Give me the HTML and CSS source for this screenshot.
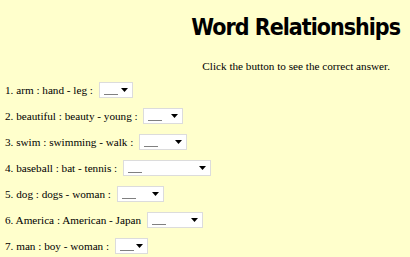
FILE: index.html
```html
<!DOCTYPE html>
<html lang="en">
<head>
    <meta charset="UTF-8">
    <title>Word Relationships</title>
    <link rel="stylesheet" href="styles.css">
</head>
<body>
    <div class="header">
        <h1>Word Relationships</h1>
        <p class="hint">Click the button to see the correct answer.</p>
    </div>
    <div class="questions">
        <div class="row">1. arm : hand - leg : <span class="pick w34"><span class="blank"></span><svg width="7" height="4" viewBox="0 0 7 4"><path d="M0 0h7L3.5 4z" fill="#000"/></svg></span></div>
        <div class="row">2. beautiful : beauty - young : <span class="pick w40"><span class="blank"></span><svg width="7" height="4" viewBox="0 0 7 4"><path d="M0 0h7L3.5 4z" fill="#000"/></svg></span></div>
        <div class="row">3. swim : swimming - walk : <span class="pick w48"><span class="blank"></span><svg width="7" height="4" viewBox="0 0 7 4"><path d="M0 0h7L3.5 4z" fill="#000"/></svg></span></div>
        <div class="row">4. baseball : bat - tennis : <span class="pick w88"><span class="blank"></span><svg width="7" height="4" viewBox="0 0 7 4"><path d="M0 0h7L3.5 4z" fill="#000"/></svg></span></div>
        <div class="row">5. dog : dogs - woman : <span class="pick w47"><span class="blank"></span><svg width="7" height="4" viewBox="0 0 7 4"><path d="M0 0h7L3.5 4z" fill="#000"/></svg></span></div>
        <div class="row">6. America : American - Japan <span class="pick w56"><span class="blank"></span><svg width="7" height="4" viewBox="0 0 7 4"><path d="M0 0h7L3.5 4z" fill="#000"/></svg></span></div>
        <div class="row">7. man : boy - woman : <span class="pick w33"><span class="blank"></span><svg width="7" height="4" viewBox="0 0 7 4"><path d="M0 0h7L3.5 4z" fill="#000"/></svg></span></div>
    </div>
</body>
</html>
```

FILE: styles.css
```css
* {
    margin: 0;
    padding: 0;
    box-sizing: border-box;
}
body {
    background-color: #ffffcc;
    font-family: "Liberation Serif", "Times New Roman", serif;
    font-size: 11.2px;
    color: #000;
    padding: 0 5px;
}
.header {
    display: flex;
    flex-direction: column;
    align-items: flex-end;
    padding-top: 12px;
}
h1 {
    font-family: "DejaVu Sans Condensed", "DejaVu Sans", sans-serif;
    font-size: 23px;
    font-weight: bold;
    letter-spacing: -1px;
    margin-right: 5px;
    line-height: 30px;
}
.hint {
    margin-top: 18px;
    margin-right: 15px;
    line-height: 13px;
}
.questions {
    display: flex;
    flex-direction: column;
    gap: 10px;
    padding-top: 9px;
}
.row {
    display: flex;
    align-items: center;
    height: 16px;
    white-space: pre;
}
.pick {
    display: inline-flex;
    align-items: center;
    justify-content: space-between;
    height: 16px;
    background: #fff;
    border: 1px solid #dcdcdc;
    padding: 0 4px 0 4px;
    margin-left: 3px;
}
.blank {
    width: 14px;
    height: 1px;
    background: #808080;
    margin-top: 8px;
}
.w34 { width: 34px; }
.w40 { width: 40px; }
.w48 { width: 48px; }
.w88 { width: 88px; }
.w47 { width: 47px; }
.w56 { width: 56px; }
.w33 { width: 33px; }
```
